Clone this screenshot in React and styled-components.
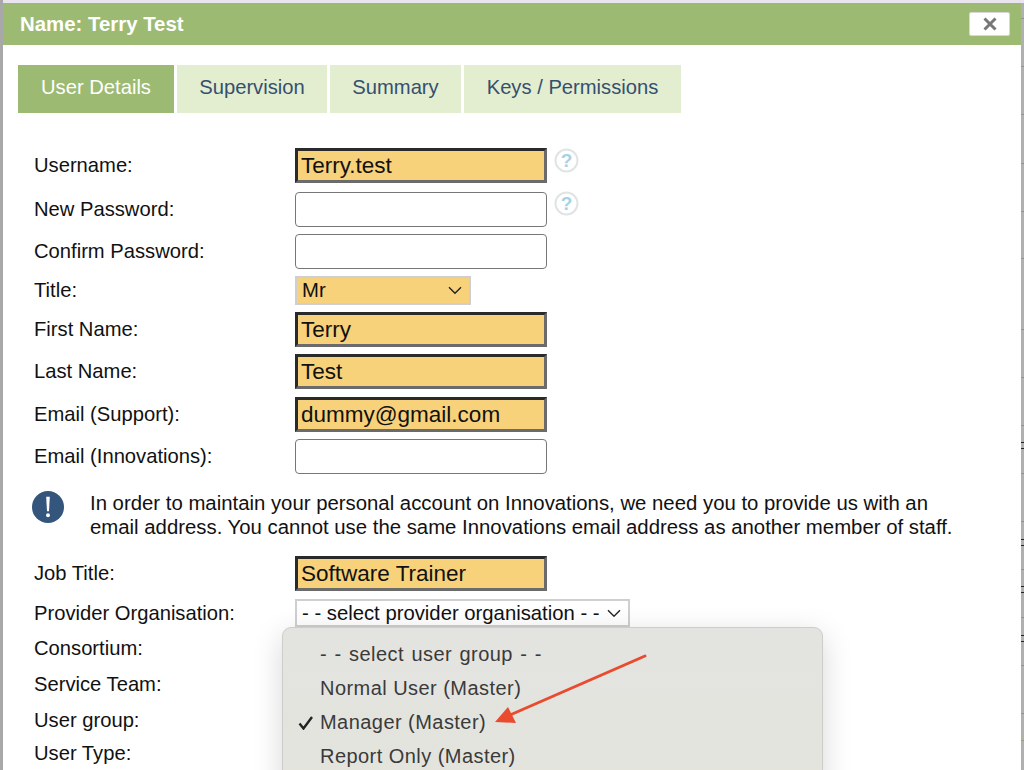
import React from 'react';
import styled, { createGlobalStyle } from 'styled-components';

const GlobalStyle = createGlobalStyle`
  html, body {
    margin: 0;
    padding: 0;
    background: #fff;
    overflow: hidden;
  }
  body {
    font-family: "Liberation Sans", Arial, sans-serif;
    color: #111;
  }
`;

const Page = styled.div`
  position: relative;
  width: 1024px;
  height: 770px;
  overflow: hidden;
  box-sizing: border-box;
  padding: 3px 3px 0 3px;
  background: #e9e4ee;
  display: flex;
`;

const LeftEdge = styled.div`
  position: absolute;
  left: 0;
  top: 0;
  bottom: 0;
  width: 3px;
  background: #a8a8a8;
`;

const RightEdge = styled.div`
  position: absolute;
  right: 0;
  top: 3px;
  bottom: 0;
  width: 3px;
  background: #b0b0b0;
`;

const Line = styled.i`
  position: absolute;
  left: 0;
  width: 3px;
  top: ${p => p.$y}px;
  height: 1px;
  background: ${p => p.$color || '#929292'};
`;

const Tick = styled.i`
  position: absolute;
  left: 0;
  width: 3px;
  top: ${p => p.$y}px;
  height: 7px;
  border-top: 1px solid #222;
  border-bottom: 1px solid #222;
  box-sizing: border-box;
`;

const Dialog = styled.div`
  flex: 1;
  background: #fff;
  display: flex;
  flex-direction: column;
`;

const TitleBar = styled.div`
  height: 42px;
  flex: none;
  background: #9cba72;
  display: flex;
  align-items: center;
  justify-content: space-between;
  padding: 0 11px 0 17px;
`;

const Title = styled.div`
  color: #fff;
  font-weight: 700;
  font-size: 20.4px;
`;

const CloseButton = styled.div`
  width: 41px;
  height: 24px;
  background: #fff;
  border: 1px solid #d8d8d8;
  border-radius: 2px;
  box-sizing: border-box;
  display: flex;
  align-items: center;
  justify-content: center;
`;

const Tabs = styled.div`
  display: flex;
  gap: 3px;
  margin: 20px 0 0 15px;
`;

const Tab = styled.div`
  width: ${p => p.$w}px;
  height: 48px;
  padding-bottom: 4px;
  display: flex;
  align-items: center;
  justify-content: center;
  box-sizing: border-box;
  font-size: 20.2px;
  background: ${p => (p.$active ? '#9cba72' : '#e3edd0')};
  color: ${p => (p.$active ? '#fff' : '#34506f')};
`;

const Form = styled.div`
  margin: 35px 0 0 31px;
  display: flex;
  flex-direction: column;
`;

const Row = styled.div`
  height: ${p => p.$h}px;
  margin-bottom: ${p => p.$mb || 0}px;
  display: flex;
  align-items: center;
`;

const Label = styled.div`
  width: 261px;
  flex: none;
  font-size: 20.2px;
`;

const TextBox = styled.div`
  width: 252px;
  height: 35px;
  box-sizing: border-box;
  font-size: 22.5px;
  line-height: 29px;
  padding-left: 3px;
  color: #111;
  ${p =>
    p.$filled
      ? `background: #f7d27a;
         border: 3px solid;
         border-color: #2a2a2a #6b6b6b #6b6b6b #2a2a2a;`
      : `background: #fff;
         border: 1px solid #777;
         border-radius: 4px;`}
`;

const SelectBox = styled.div`
  width: ${p => p.$w}px;
  height: ${p => p.$h}px;
  box-sizing: border-box;
  border: 2px solid #cfcfcf;
  background: ${p => (p.$filled ? '#f7d27a' : '#fff')};
  display: flex;
  align-items: center;
  justify-content: space-between;
  padding: 0 7px 0 5px;
  font-size: 20.3px;
  white-space: nowrap;
`;

const Help = styled.svg`
  margin: ${p => (p.$shift ? '-12px' : '-10px')} 0 0 7px;
  flex: none;
`;

const Note = styled.div`
  display: flex;
  margin: 17px 0 19px 0;
  height: 46px;
`;

const NoteIcon = styled.svg`
  flex: none;
  margin: 0 26px 0 -2px;
`;

const NoteText = styled.p`
  margin: 0;
  font-size: 20.35px;
  line-height: 24px;
  white-space: nowrap;
`;

const Popup = styled.div`
  position: absolute;
  left: 282px;
  top: 627px;
  width: 541px;
  height: 170px;
  box-sizing: border-box;
  padding-top: 9px;
  border: 1px solid #cdcdcb;
  border-radius: 9px;
  background: linear-gradient(to bottom, #e3e3e1 0, #e4e4dc 100%);
  box-shadow: 0 8px 30px rgba(0, 0, 0, 0.16);
`;

const Option = styled.div`
  position: relative;
  height: 34px;
  line-height: 34px;
  padding-left: 37px;
  font-size: 20px;
  letter-spacing: 0.45px;
  word-spacing: ${p => (p.$placeholder ? '1.4px' : '0')};
  color: #3a3a3a;
`;

const Check = styled.svg`
  position: absolute;
  left: 15px;
  top: 11px;
`;

const Arrow = styled.svg`
  position: absolute;
  left: 490px;
  top: 650px;
`;

const Chevron = ({ size = 14 }) => (
  <svg width={size} height={size * 0.6} viewBox="0 0 14 8" fill="none">
    <path d="M1 1l6 6 6-6" stroke="#222" strokeWidth="1.4" />
  </svg>
);

const HelpIcon = ({ shift }) => (
  <Help $shift={shift} width="25" height="25" viewBox="0 0 25 25">
    <circle cx="12.5" cy="12.5" r="11" fill="#fff" stroke="#e0e4e4" strokeWidth="2" />
    <text x="12.5" y="19" fontSize="19" fontWeight="700" textAnchor="middle" fill="#a5d3e4" fontFamily="Liberation Sans">?</text>
  </Help>
);

const lines = [15, 63, 111, 160, 208, 255, 326, 374, 422, 470, 518, 566, 614, 662, 710];
const ticks = [439, 536, 583, 632];

export default function App() {
  return (
    <Page>
      <GlobalStyle />
      <Dialog>
        <TitleBar>
          <Title>Name: Terry Test</Title>
          <CloseButton>
            <svg width="14" height="14" viewBox="0 0 14 14">
              <path d="M1.5 1.5l11 11M12.5 1.5l-11 11" stroke="#777" strokeWidth="3" />
            </svg>
          </CloseButton>
        </TitleBar>

        <Tabs>
          <Tab $w={156} $active>User Details</Tab>
          <Tab $w={150}>Supervision</Tab>
          <Tab $w={131}>Summary</Tab>
          <Tab $w={217}>Keys / Permissions</Tab>
        </Tabs>

        <Form>
          <Row $h={35} $mb={9}>
            <Label>Username:</Label>
            <TextBox $filled>Terry.test</TextBox>
            <HelpIcon />
          </Row>
          <Row $h={35} $mb={7}>
            <Label>New Password:</Label>
            <TextBox />
            <HelpIcon shift />
          </Row>
          <Row $h={35} $mb={7}>
            <Label>Confirm Password:</Label>
            <TextBox />
          </Row>
          <Row $h={29} $mb={7}>
            <Label>Title:</Label>
            <SelectBox $filled $w={176} $h={29}>Mr <Chevron /></SelectBox>
          </Row>
          <Row $h={35} $mb={7}>
            <Label>First Name:</Label>
            <TextBox $filled>Terry</TextBox>
          </Row>
          <Row $h={35} $mb={8}>
            <Label>Last Name:</Label>
            <TextBox $filled>Test</TextBox>
          </Row>
          <Row $h={35} $mb={7}>
            <Label>Email (Support):</Label>
            <TextBox $filled>dummy@gmail.com</TextBox>
          </Row>
          <Row $h={35}>
            <Label>Email (Innovations):</Label>
            <TextBox />
          </Row>

          <Note>
            <NoteIcon width="32" height="32" viewBox="0 0 33 33">
              <circle cx="16.5" cy="16.5" r="16.5" fill="#34557c" />
              <path d="M14.6 6h3.8l-.9 15h-2z" fill="#fff" />
              <circle cx="16.5" cy="25" r="2" fill="#fff" />
            </NoteIcon>
            <NoteText>
              In order to maintain your personal account on Innovations, we need you to provide us with an
              <br />
              email address. You cannot use the same Innovations email address as another member of staff.
            </NoteText>
          </Note>

          <Row $h={35} $mb={8}>
            <Label>Job Title:</Label>
            <TextBox $filled>Software Trainer</TextBox>
          </Row>
          <Row $h={28} $mb={7}>
            <Label>Provider Organisation:</Label>
            <SelectBox $w={335} $h={28}>- - select provider organisation - - <Chevron /></SelectBox>
          </Row>
          <Row $h={28} $mb={8}>
            <Label>Consortium:</Label>
          </Row>
          <Row $h={28} $mb={8}>
            <Label>Service Team:</Label>
          </Row>
          <Row $h={28} $mb={5}>
            <Label>User group:</Label>
          </Row>
          <Row $h={28}>
            <Label>User Type:</Label>
          </Row>
        </Form>
      </Dialog>

      <LeftEdge />
      <RightEdge>
        {lines.map(y => <Line key={y} $y={y} />)}
        <Line $y={737} $color="#8aa868" />
        {ticks.map(y => <Tick key={y} $y={y} />)}
      </RightEdge>

      <Popup>
        <Option $placeholder>- - select user group - -</Option>
        <Option>Normal User (Master)</Option>
        <Option>
          <Check width="16" height="14" viewBox="0 0 16 14" fill="none">
            <path d="M1.5 7.5l4 5L14 1" stroke="#222" strokeWidth="2.4" />
          </Check>
          Manager (Master)
        </Option>
        <Option>Report Only (Master)</Option>
      </Popup>

      <Arrow width="160" height="75" viewBox="0 0 160 75" fill="none">
        <path d="M155 6L20 65" stroke="#ea4a2d" strokeWidth="3" strokeLinecap="round" />
        <path d="M5 72L18 57l8 16z" fill="#ea4a2d" />
      </Arrow>
    </Page>
  );
}
